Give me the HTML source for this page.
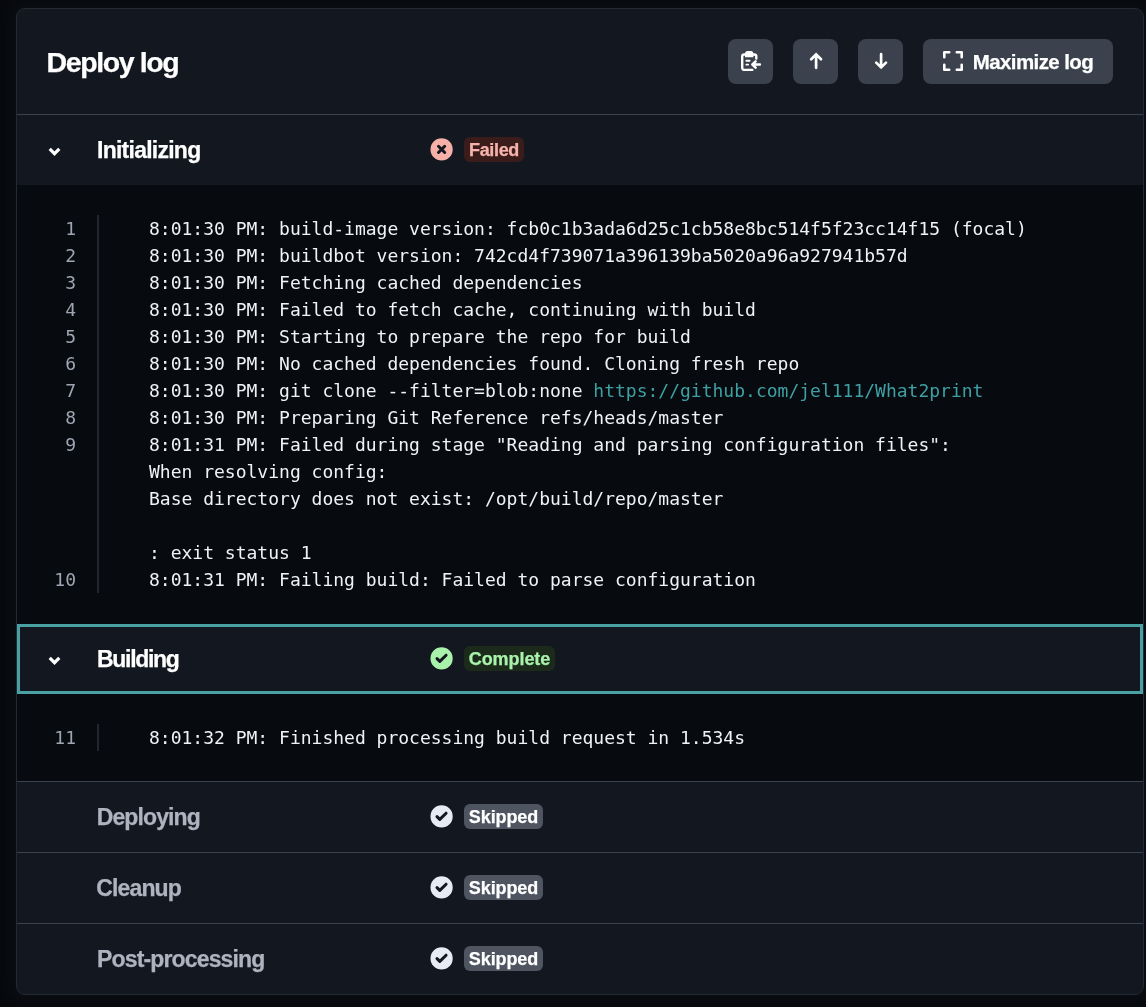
<!DOCTYPE html>
<html lang="en">
<head>
<meta charset="utf-8">
<title>Deploy log</title>
<style>
*{box-sizing:border-box;margin:0;padding:0}
html,body{width:1146px;height:1007px;overflow:hidden;background:#07090d}
body{font-family:"Liberation Sans",sans-serif;color:#fff;position:relative}
.card{will-change:transform;position:absolute;left:16px;top:8px;width:1128px;height:987px;background:#131820;border:1px solid #242a33;border-radius:9px;overflow:hidden;box-shadow:0 0 14px 6px #0b0e14}
.head{position:absolute;left:0;top:0;width:100%;height:106px;border-bottom:1px solid #3c424d}
.head h1{position:absolute;left:29.5px;top:37px;font-size:28.5px;line-height:33px;font-weight:700;letter-spacing:-1.4px;white-space:nowrap}
.btn{position:absolute;top:30px;height:45px;width:45px;border-radius:8px;background:#3c424d;color:#fff}
.btn svg{display:block}
.btn.max{width:190px;font-weight:700;font-size:20.5px;line-height:45px;letter-spacing:-.61px;white-space:nowrap}
.btn.max svg{position:absolute;left:19px;top:11px}
.btn.max span{position:absolute;left:49.8px;top:0}
.row{position:absolute;left:0;width:100%;height:70px}
.row.focus{box-shadow:inset 0 0 0 3px #49a1a4}
.row h2{position:absolute;left:80px;top:21px;font-size:23px;line-height:28px;font-weight:700;white-space:nowrap}
.row.dim h2{color:#adb3bf}
.row .chev{position:absolute;left:29px;top:28px}
.row .st{position:absolute;left:411px;top:21px}
.badge{position:absolute;left:447px;top:22px;height:25px;border-radius:6px;font-size:18px;font-weight:700;line-height:26px;text-align:center;white-space:nowrap}
.b-fail{background:#3a1c1b;color:#f6b3ac}
.b-ok{background:#1b2a1b;color:#a9f2ab}
.b-skip{background:#4e5560;color:#fff}
.sep{position:absolute;left:0;width:100%;height:1px;background:#3c424d}
.log{position:absolute;left:0;width:100%;background:#070a0e;font-family:"DejaVu Sans Mono","Liberation Mono",monospace;font-size:18px;line-height:27px;color:#f0f2f5}
.log .ln{position:absolute;left:0;width:59px;text-align:right;color:#9fa6b3}
.log .tx{position:absolute;left:132px;white-space:pre}
.log .bar{position:absolute;left:80px;width:2px;background:#21252e}
.log .lnk{color:#3fa0a4}
.head h1,.row h2,.badge,.btn.max span{-webkit-text-stroke:.25px currentColor}
</style>
</head>
<body>
<div class="card">
  <div class="head">
    <h1>Deploy log</h1>
    <div class="btn" style="left:711px"><svg width="45" height="45" viewBox="0 0 45 45" fill="none" stroke="#fff" stroke-linecap="round" stroke-linejoin="round"><path d="M28.3 19.6 V17.6 a2.1 2.1 0 0 0 -2.1 -2.1 H16.3 a2.1 2.1 0 0 0 -2.1 2.1 V28.8 a2.1 2.1 0 0 0 2.1 2.1 H24.3" stroke-width="2.4"/><path d="M17 18.2 V14.8 a2.7 2.7 0 0 1 2.7 -2.7 h3 a2.7 2.7 0 0 1 2.7 2.7 V18.2 z" fill="#fff" stroke="none"/><path d="M18.4 21.8 H21.6 M18.4 25.6 H20.1" stroke-width="1.9"/><path d="M24.6 25.5 H31.9 M27.6 22.3 L24.4 25.5 L27.6 28.7" stroke-width="2.5"/></svg></div>
    <div class="btn" style="left:776px"><svg width="45" height="45" viewBox="0 0 45 45" fill="none" stroke="#fff" stroke-width="2.7" stroke-linecap="round" stroke-linejoin="miter"><path d="M23.1 15.8 V28.8 M18.2 20.2 L23.1 15.4 L28 20.2"/></svg></div>
    <div class="btn" style="left:841px"><svg width="45" height="45" viewBox="0 0 45 45" fill="none" stroke="#fff" stroke-width="2.7" stroke-linecap="round" stroke-linejoin="miter"><path d="M23.1 15.2 V28.2 M18.2 23.6 L23.1 28.4 L28 23.6"/></svg></div>
    <div class="btn max" style="left:906px"><svg width="22" height="22" viewBox="0 0 22 22" fill="none" stroke="#fff" stroke-width="2.6" stroke-linecap="round" stroke-linejoin="round"><path d="M2.3 7.2 V2.3 H7.2 M14.8 2.3 H19.7 V7.2 M19.7 14.8 V19.7 H14.8 M7.2 19.7 H2.3 V14.8"/></svg><span>Maximize log</span></div>
  </div>

  <div class="row" style="top:106px">
    <svg class="chev" width="18" height="16" viewBox="0 0 18 16"><path d="M3.7 5.9 L8.5 10.7 L13.3 5.9" fill="none" stroke="#fff" stroke-width="3.2" stroke-linecap="butt" stroke-linejoin="miter"/></svg>
    <h2 style="letter-spacing:-.75px">Initializing</h2>
    <svg class="st" width="26" height="26" viewBox="-13.6 -13.4 26 26"><circle r="11.1" fill="#f5b0a8"/><path d="M-3.1 -3.1 L3.1 3.1 M3.1 -3.1 L-3.1 3.1" fill="none" stroke="#131820" stroke-width="3" stroke-linecap="round"/></svg>
    <span class="badge b-fail" style="width:60px;letter-spacing:-.35px">Failed</span>
  </div>

  <div class="log" style="top:176px;height:439px">
    <div class="bar" style="top:30px;height:378px"></div>
    <div class="ln" style="top:30px">1</div>
    <div class="tx" style="top:30px">8:01:30 PM: build-image version: fcb0c1b3ada6d25c1cb58e8bc514f5f23cc14f15 (focal)</div>
    <div class="ln" style="top:57px">2</div>
    <div class="tx" style="top:57px">8:01:30 PM: buildbot version: 742cd4f739071a396139ba5020a96a927941b57d</div>
    <div class="ln" style="top:84px">3</div>
    <div class="tx" style="top:84px">8:01:30 PM: Fetching cached dependencies</div>
    <div class="ln" style="top:111px">4</div>
    <div class="tx" style="top:111px">8:01:30 PM: Failed to fetch cache, continuing with build</div>
    <div class="ln" style="top:138px">5</div>
    <div class="tx" style="top:138px">8:01:30 PM: Starting to prepare the repo for build</div>
    <div class="ln" style="top:165px">6</div>
    <div class="tx" style="top:165px">8:01:30 PM: No cached dependencies found. Cloning fresh repo</div>
    <div class="ln" style="top:192px">7</div>
    <div class="tx" style="top:192px">8:01:30 PM: git clone --filter=blob:none <span class="lnk">https://github.com/jel111/What2print</span></div>
    <div class="ln" style="top:219px">8</div>
    <div class="tx" style="top:219px">8:01:30 PM: Preparing Git Reference refs/heads/master</div>
    <div class="ln" style="top:246px">9</div>
    <div class="tx" style="top:246px">8:01:31 PM: Failed during stage &quot;Reading and parsing configuration files&quot;:</div>
    <div class="tx" style="top:273px">When resolving config:</div>
    <div class="tx" style="top:300px">Base directory does not exist: /opt/build/repo/master</div>
    <div class="tx" style="top:354px">: exit status 1</div>
    <div class="ln" style="top:381px">10</div>
    <div class="tx" style="top:381px">8:01:31 PM: Failing build: Failed to parse configuration</div>
  </div>

  <div class="row focus" style="top:615px">
    <svg class="chev" width="18" height="16" viewBox="0 0 18 16"><path d="M3.7 5.9 L8.5 10.7 L13.3 5.9" fill="none" stroke="#fff" stroke-width="3.2" stroke-linecap="butt" stroke-linejoin="miter"/></svg>
    <h2 style="letter-spacing:-1.3px">Building</h2>
    <svg class="st" width="26" height="26" viewBox="-13.6 -13.4 26 26"><circle r="11.1" fill="#a9f2ab"/><path d="M-4.6 0.2 L-1.8 3 L4.5 -3.2" fill="none" stroke="#131820" stroke-width="3" stroke-linecap="round" stroke-linejoin="round"/></svg>
    <span class="badge b-ok" style="width:91px;letter-spacing:-.07px">Complete</span>
  </div>

  <div class="log" style="top:685px;height:87px">
    <div class="bar" style="top:30px;height:27px"></div>
    <div class="ln" style="top:30px">11</div>
    <div class="tx" style="top:30px">8:01:32 PM: Finished processing build request in 1.534s</div>
  </div>

  <div class="sep" style="top:772px"></div>
  <div class="row dim" style="top:773px">
    <h2 style="letter-spacing:-.88px;margin-left:-.3px">Deploying</h2>
    <svg class="st" width="26" height="26" viewBox="-13.6 -13.4 26 26"><circle r="11.1" fill="#e8ebf3"/><path d="M-4.6 0.2 L-1.8 3 L4.5 -3.2" fill="none" stroke="#131820" stroke-width="3" stroke-linecap="round" stroke-linejoin="round"/></svg>
    <span class="badge b-skip" style="width:79px;letter-spacing:-.1px">Skipped</span>
  </div>
  <div class="sep" style="top:843px"></div>
  <div class="row dim" style="top:844px">
    <h2 style="letter-spacing:-.85px;margin-left:-.8px">Cleanup</h2>
    <svg class="st" width="26" height="26" viewBox="-13.6 -13.4 26 26"><circle r="11.1" fill="#e8ebf3"/><path d="M-4.6 0.2 L-1.8 3 L4.5 -3.2" fill="none" stroke="#131820" stroke-width="3" stroke-linecap="round" stroke-linejoin="round"/></svg>
    <span class="badge b-skip" style="width:79px;letter-spacing:-.1px">Skipped</span>
  </div>
  <div class="sep" style="top:914px"></div>
  <div class="row dim" style="top:915px">
    <h2 style="letter-spacing:-.85px">Post-processing</h2>
    <svg class="st" width="26" height="26" viewBox="-13.6 -13.4 26 26"><circle r="11.1" fill="#e8ebf3"/><path d="M-4.6 0.2 L-1.8 3 L4.5 -3.2" fill="none" stroke="#131820" stroke-width="3" stroke-linecap="round" stroke-linejoin="round"/></svg>
    <span class="badge b-skip" style="width:79px;letter-spacing:-.1px">Skipped</span>
  </div>
</div>
</body>
</html>
